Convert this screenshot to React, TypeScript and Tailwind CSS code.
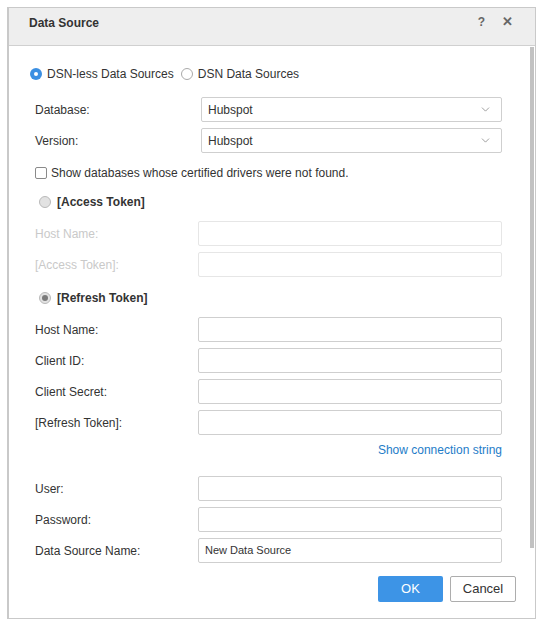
import { ChevronDown } from "lucide-react";

type RowProps = {
  label: string;
  disabled?: boolean;
  value?: string;
};

function FieldRow({ label, disabled, value }: RowProps) {
  return (
    <div className="flex h-[25px] items-center pl-[5px]">
      <label className={`w-[163px] shrink-0 text-[12px] ${disabled ? "text-[#c9c9c9]" : "text-[#333]"}`}>
        {label}
      </label>
      <div
        className={`flex h-[25px] flex-1 items-center rounded-[2px] border px-[6px] text-[11px] text-[#333] ${
          disabled ? "border-[#e6e6e6]" : "border-[#cfcfcf]"
        }`}
      >
        {value}
      </div>
    </div>
  );
}

function SelectRow({ label, value }: { label: string; value: string }) {
  return (
    <div className="flex h-[25px] items-center pl-[5px]">
      <label className="w-[166px] shrink-0 text-[12px] text-[#333]">{label}</label>
      <div className="flex h-[25px] flex-1 items-center justify-between rounded-[2px] border border-[#cfcfcf] pl-[6px] pr-[9px] text-[12px] text-[#333]">
        <span>{value}</span>
        <ChevronDown size={13} strokeWidth={1.3} className="text-[#777]" />
      </div>
    </div>
  );
}

function SectionRadio({ label, checked }: { label: string; checked?: boolean }) {
  return (
    <div className="flex h-4 items-center pl-[9px]">
      <span className="flex h-[12px] w-[12px] items-center justify-center rounded-full border border-[#b9b9b9] bg-[#e2e2e2]">
        {checked && <span className="h-[6px] w-[6px] rounded-full bg-[#7a7a7a]" />}
      </span>
      <span className="ml-[6px] text-[12px] font-bold text-[#333]">{label}</span>
    </div>
  );
}

export default function App() {
  return (
    <div className="min-h-screen bg-white pl-[7px] pt-[7px] font-['Liberation_Sans',Arial,sans-serif]">
      <div className="flex h-[612px] w-[529px] flex-col border border-[#c9c9c9] border-l-2 bg-white">
        <div className="flex h-[38px] shrink-0 items-start justify-between border-b border-[#d0d0d0] bg-[#eeeeee] pl-[20px] pr-[22px]">
          <span className="mt-[6px] text-[12px] font-bold text-[#333]">Data Source</span>
          <div className="mt-[4px] flex items-center gap-[17px] text-[#666]">
            <span className="text-[12px] font-bold">?</span>
            <span className="text-[13px] font-bold">✕</span>
          </div>
        </div>

        <div className="relative flex flex-1 flex-col pl-[21px] pr-[33px] pt-[20px]">
          <div className="absolute right-[1px] top-[1px] h-[501px] w-[4px] bg-[#c2c2c2]" />

          <div className="flex h-4 items-center text-[12px] text-[#333]">
            <span className="flex h-[12px] w-[12px] items-center justify-center rounded-full bg-[#3b8fe2]">
              <span className="h-[4px] w-[4px] rounded-full bg-white" />
            </span>
            <span className="ml-[5px]">DSN-less Data Sources</span>
            <span className="ml-[7px] h-[12px] w-[12px] rounded-full border border-[#aaa] bg-white" />
            <span className="ml-[5px]">DSN Data Sources</span>
          </div>

          <div className="mt-[15px] flex flex-col gap-[6px]">
            <SelectRow label="Database:" value="Hubspot" />
            <SelectRow label="Version:" value="Hubspot" />
          </div>

          <div className="mt-[12px] flex h-4 items-center pl-[5px] text-[12px] text-[#333]">
            <span className="h-[12px] w-[12px] rounded-[2px] border border-[#8a8a8a] bg-white" />
            <span className="ml-[4px]">Show databases whose certified drivers were not found.</span>
          </div>

          <div className="mt-[13px]">
            <SectionRadio label="[Access Token]" />
          </div>

          <div className="mt-[11px] flex flex-col gap-[6px]">
            <FieldRow label="Host Name:" disabled />
            <FieldRow label="[Access Token]:" disabled />
          </div>

          <div className="mt-[13px]">
            <SectionRadio label="[Refresh Token]" checked />
          </div>

          <div className="mt-[11px] flex flex-col gap-[6px]">
            <FieldRow label="Host Name:" />
            <FieldRow label="Client ID:" />
            <FieldRow label="Client Secret:" />
            <FieldRow label="[Refresh Token]:" />
          </div>

          <div className="mt-[7px] flex h-4 items-center justify-end text-[12px] text-[#1e7cc8]">
            Show connection string
          </div>

          <div className="mt-[18px] flex flex-col gap-[6px]">
            <FieldRow label="User:" />
            <FieldRow label="Password:" />
            <FieldRow label="Data Source Name:" value="New Data Source" />
          </div>

          <div className="mt-[13px] -mr-[14px] flex justify-end gap-[7px]">
            <button
              type="button"
              className="h-[26px] w-[65px] rounded-[2px] bg-[#3d94e6] text-[13px] text-white"
            >
              OK
            </button>
            <button
              type="button"
              className="h-[26px] w-[66px] rounded-[2px] border border-[#adadad] bg-white text-[13px] text-[#333]"
            >
              Cancel
            </button>
          </div>
        </div>
      </div>
    </div>
  );
}
